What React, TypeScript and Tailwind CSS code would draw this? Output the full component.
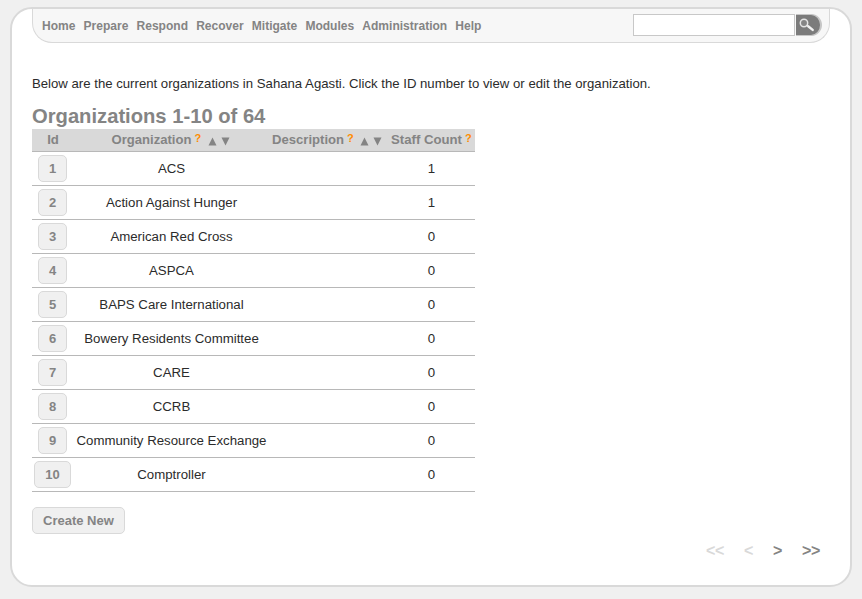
import React from "react";

const menu = ["Home", "Prepare", "Respond", "Recover", "Mitigate", "Modules", "Administration", "Help"];

const organizations = [
  { id: 1, name: "ACS", staff: 1 },
  { id: 2, name: "Action Against Hunger", staff: 1 },
  { id: 3, name: "American Red Cross", staff: 0 },
  { id: 4, name: "ASPCA", staff: 0 },
  { id: 5, name: "BAPS Care International", staff: 0 },
  { id: 6, name: "Bowery Residents Committee", staff: 0 },
  { id: 7, name: "CARE", staff: 0 },
  { id: 8, name: "CCRB", staff: 0 },
  { id: 9, name: "Community Resource Exchange", staff: 0 },
  { id: 10, name: "Comptroller", staff: 0 },
];

function Hint() {
  return <span className="ml-[3px] -mt-[4px] w-[6px] text-[11px] leading-[14px] text-[#ff8c00]">?</span>;
}

function SortArrows() {
  return (
    <svg className="ml-[7px] mt-[3px]" width="22" height="9" viewBox="0 0 22 9" fill="#848484">
      <path d="M4.5 0.5 L8.5 8.5 H0.5 Z" />
      <path d="M13.5 0.5 H21.5 L17.5 8.5 Z" />
    </svg>
  );
}

function SearchBox() {
  return (
    <form className="flex h-[22px]" onSubmit={(e) => e.preventDefault()}>
      <input aria-label="Search" className="h-[22px] w-[162px] border border-[#c8c8c8] bg-white px-1 text-xs outline-none" />
      <button
        type="submit"
        aria-label="Submit search"
        className="ml-px h-[22px] w-[26px] rounded-r-[11px] border-y border-r-2 border-[#c6c6c6] bg-[#7b7b7b]"
      >
        <svg width="24" height="20" viewBox="0 0 24 20" fill="none">
          <circle cx="8" cy="8" r="3.7" fill="#858585" stroke="#e4e4e4" strokeWidth="1.5" />
          <path d="M10.8 10.2 L12.5 11.5" stroke="#e9e9e9" strokeWidth="1.6" />
          <path d="M12.5 11.5 L16.7 14.9" stroke="#f1f1f1" strokeWidth="2.4" strokeLinecap="round" />
        </svg>
      </button>
    </form>
  );
}

export default function App() {
  return (
    <div className="h-[599px] w-[862px] bg-[#f0f0f0] pl-[10px] pt-[7px] font-['Liberation_Sans',Arial,sans-serif] text-[13.18px] text-[#2b2b2b]">
      <main className="flex h-[580px] w-[842px] flex-col rounded-[22px] border-2 border-[#d9d9d9] bg-white px-5">
        <header className="flex h-[34px] w-[798px] shrink-0 justify-between rounded-b-[20px] border border-t-0 border-[#d9d9d9] bg-[#f7f7f7] pl-[9px] pr-[7px] pt-[5px]">
          <nav className="flex gap-[8.15px] pt-[4px] text-[12.04px] font-bold leading-4 text-[#848484]">
            {menu.map((item) => (
              <a key={item}>{item}</a>
            ))}
          </nav>
          <SearchBox />
        </header>

        <p className="mt-[33px] leading-4">
          Below are the current organizations in Sahana Agasti. Click the ID number to view or edit the organization.
        </p>
        <h1 className="mt-[12px] h-[25px] text-[20.2px] font-bold leading-[25px] text-[#848484]">Organizations 1-10 of 64</h1>

        <table className="w-[443px] table-fixed border-separate border-spacing-0 text-center">
          <colgroup>
            <col className="w-[42px]" />
            <col className="w-[195px]" />
            <col className="w-[119px]" />
            <col className="w-[87px]" />
          </colgroup>
          <thead>
            <tr className="h-[23px] bg-[#d9d9d9] text-[#848484] [&>th]:border-b [&>th]:border-[#b8b8b8] [&>th]:p-0">
              <th>Id</th>
              <th>
                <div className="flex items-center justify-center pr-[2px] text-[13.1px]">
                  Organization
                  <Hint />
                  <SortArrows />
                </div>
              </th>
              <th>
                <div className="flex items-center justify-center pr-[3px] text-[13.1px]">
                  Description
                  <Hint />
                  <SortArrows />
                </div>
              </th>
              <th>
                <div className="flex items-center justify-center pr-px">
                  Staff Count
                  <Hint />
                </div>
              </th>
            </tr>
          </thead>
          <tbody className="text-[13.25px]">
            {organizations.map((org) => (
              <tr key={org.id} className="h-[34px] [&>td]:border-b [&>td]:border-[#b8b8b8] [&>td]:p-0">
                <td>
                  <div className="flex justify-center pr-px">
                    <a className="h-[27px] rounded-[5px] border border-[#d9d9d9] bg-[#f0f0f0] px-[10px] text-[13px] font-bold leading-[25px] text-[#848484]">
                      {org.id}
                    </a>
                  </div>
                </td>
                <td>{org.name}</td>
                <td />
                <td>{org.staff}</td>
              </tr>
            ))}
          </tbody>
        </table>

        <a className="mt-[15px] h-[27px] self-start rounded-[5px] border border-[#d9d9d9] bg-[#f0f0f0] px-[10px] text-[13px] font-bold leading-[25px] text-[#848484]">
          Create New
        </a>

        <div className="mt-[7px] flex justify-end gap-5 pr-[10px] text-base font-bold leading-5 tracking-[-0.34px] text-[#848484]">
          <span className="text-[#d9d9d9]">&lt;&lt;</span>
          <span className="text-[#d9d9d9]">&lt;</span>
          <a>&gt;</a>
          <a>&gt;&gt;</a>
        </div>
      </main>
    </div>
  );
}
